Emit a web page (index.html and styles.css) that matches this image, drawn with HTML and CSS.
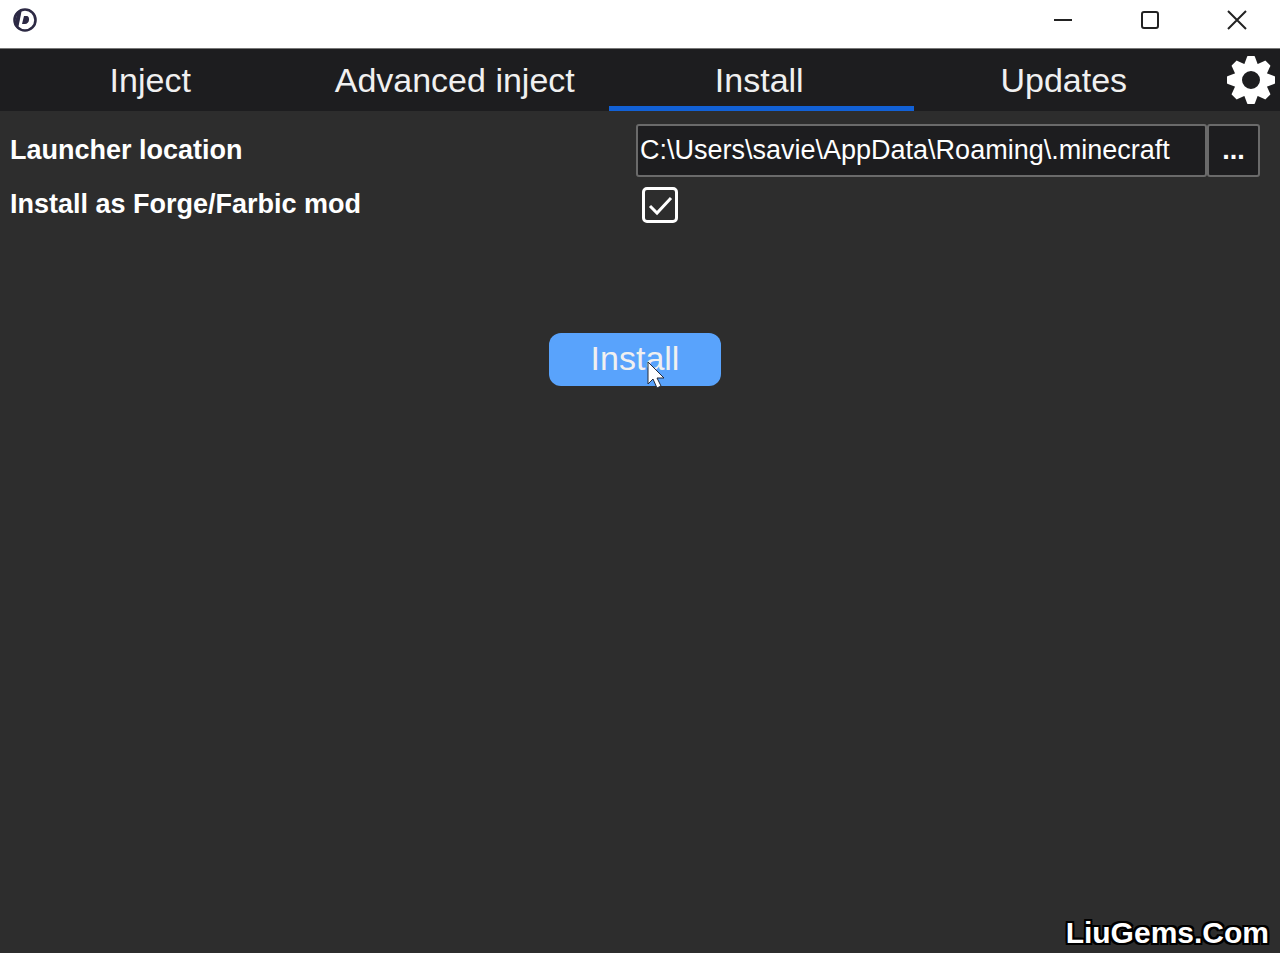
FILE: index.html
```html
<!DOCTYPE html>
<html lang="en">
<head>
  <meta charset="UTF-8">
  <meta name="viewport" content="width=device-width, initial-scale=1">
  <title>Install</title>
  <link rel="stylesheet" href="styles.css">
</head>
<body>
  <header class="titlebar">
    <svg class="logo" viewBox="0 0 26 26" aria-hidden="true">
      <circle cx="13" cy="13" r="10.5" fill="#fff" stroke="#2c2944" stroke-width="2.6"/>
      <path d="M5 5l5-3-4 20-3-4z" fill="#2c2944"/>
      <path d="M10 6h5c4 0 6 3 5 7s-4 7-9 7H7z" fill="#fff"/>
      <path d="M12 9h2c3 0 3 2 3 4s-2 4-4 4h-3z" fill="#2c2944"/>
    </svg>
    <div class="window-buttons">
      <button type="button" class="window-button" aria-label="Minimize">
        <svg viewBox="0 0 20 20"><path d="M1 10h18"/></svg>
      </button>
      <button type="button" class="window-button" aria-label="Maximize">
        <svg viewBox="0 0 20 20"><rect x="2" y="2" width="16" height="16" rx="2"/></svg>
      </button>
      <button type="button" class="window-button" aria-label="Close">
        <svg viewBox="0 0 20 20"><path d="M1 1l18 18M19 1L1 19"/></svg>
      </button>
    </div>
  </header>

  <nav class="tabs">
    <button type="button" class="tab">Inject</button>
    <button type="button" class="tab">Advanced inject</button>
    <button type="button" class="tab active">Install</button>
    <button type="button" class="tab">Updates</button>
    <button type="button" class="settings" aria-label="Settings">
      <svg viewBox="-24 -24 48 48">
        <defs>
          <path id="tooth" d="M-7-15L-4-23Q-4-24-3-24H3Q4-24 4-23L7-15z"/>
        </defs>
        <g fill="#fff">
          <use href="#tooth"/>
          <use href="#tooth" transform="rotate(45)"/>
          <use href="#tooth" transform="rotate(90)"/>
          <use href="#tooth" transform="rotate(135)"/>
          <use href="#tooth" transform="rotate(180)"/>
          <use href="#tooth" transform="rotate(225)"/>
          <use href="#tooth" transform="rotate(270)"/>
          <use href="#tooth" transform="rotate(315)"/>
        </g>
        <circle r="13" fill="none" stroke="#fff" stroke-width="8"/>
      </svg>
    </button>
  </nav>

  <main class="content">
    <form class="form">
      <div class="row">
        <label for="location">Launcher location</label>
        <div class="path">
          <input type="text" id="location" value="C:\Users\savie\AppData\Roaming\.minecraft" spellcheck="false">
          <button type="button" class="browse" aria-label="Browse">...</button>
        </div>
      </div>
      <div class="row">
        <label for="mod">Install as Forge/Farbic mod</label>
        <div class="check">
          <input type="checkbox" id="mod" checked>
          <svg viewBox="0 0 36 36" aria-hidden="true"><path d="M8 19l7 7 14-15"/></svg>
        </div>
      </div>
      <button type="button" class="install">
        Install
        <svg class="cursor" viewBox="0 0 18 28" aria-hidden="true">
          <path d="M1 1v22l5-5 4 9 4-2-4-8h7z"/>
        </svg>
      </button>
    </form>
  </main>

  <footer class="watermark">LiuGems.Com</footer>
</body>
</html>
```

FILE: styles.css
```css
* {
  box-sizing: border-box;
}
body {
  display: flex;
  flex-direction: column;
  min-height: 100vh;
  margin: 0;
  background-color: #2d2d2d;
  color: #fff;
  font-family: "Liberation Sans", Arial, sans-serif;
}
button,
input {
  margin: 0;
  padding: 0;
  border: none;
  background: none;
  color: inherit;
  font-family: inherit;
}
.titlebar {
  display: flex;
  justify-content: space-between;
  height: 49px;
  padding-left: 12px;
  border-bottom: 1px solid #777;
  background-color: #fff;
}
.logo {
  width: 26px;
  height: 26px;
  margin-top: 7px;
}
.window-buttons {
  display: flex;
}
.window-button {
  width: 87px;
  height: 40px;
}
.window-button svg {
  display: block;
  width: 20px;
  height: 20px;
  margin: 0 auto;
  fill: none;
  stroke: #222;
  stroke-width: 2;
}
.tabs {
  display: flex;
  height: 62px;
  background-color: #1d1d1f;
}
.tab {
  flex: 1;
  padding: 5px 4px 0 0;
  border-bottom: 5px solid transparent;
  color: #f0f0f0;
  font-size: 34px;
}
.tab.active {
  border-color: #1261d6;
}
.settings {
  width: 62px;
  padding-left: 9px;
}
.settings svg {
  display: block;
  width: 48px;
  height: 48px;
}
.content {
  flex: 1;
  padding: 13px 20px 0 10px;
}
.row {
  display: grid;
  grid-template-columns: 1fr 1fr;
  align-items: center;
  margin-bottom: 10px;
  font-size: 27px;
  font-weight: bold;
}
.row label {
  padding-bottom: 1px;
}
.path {
  display: flex;
  height: 53px;
  padding-left: 1px;
}
.path input,
.browse {
  border: 2px solid #6a6a6a;
  border-radius: 3px;
  background-color: #1d1d1f;
  font-size: 27px;
}
.path input {
  flex: 1;
  min-width: 0;
  padding: 0 2px 1px;
}
.browse {
  width: 53px;
  font-weight: bold;
}
.check {
  position: relative;
  width: 36px;
  height: 36px;
  margin-left: 7px;
}
.check input {
  display: block;
  width: 36px;
  height: 36px;
  border: 3px solid #fff;
  border-radius: 5px;
  appearance: none;
}
.check svg {
  position: absolute;
  inset: 0;
  fill: none;
  stroke: #fff;
  stroke-width: 3;
  pointer-events: none;
}
.check input:not(:checked) + svg {
  display: none;
}
.install {
  position: relative;
  display: block;
  width: 172px;
  height: 53px;
  margin: 110px auto 0;
  padding-bottom: 2px;
  border-radius: 12px;
  background-color: #59a3fc;
  color: #f0f0f0;
  font-size: 34px;
}
.cursor {
  position: absolute;
  top: 28px;
  left: 98px;
  width: 18px;
  height: 28px;
  fill: #fff;
  stroke: #252b3b;
  stroke-width: 1;
}
.watermark {
  padding: 0 11px 3px;
  font-size: 30px;
  font-weight: bold;
  text-align: right;
  text-shadow: -2px -2px 0 #000, 2px -2px 0 #000, -2px 2px 0 #000, 2px 2px 0 #000,
    0 -2px 0 #000, 0 2px 0 #000, -2px 0 0 #000, 2px 0 0 #000;
}
```
